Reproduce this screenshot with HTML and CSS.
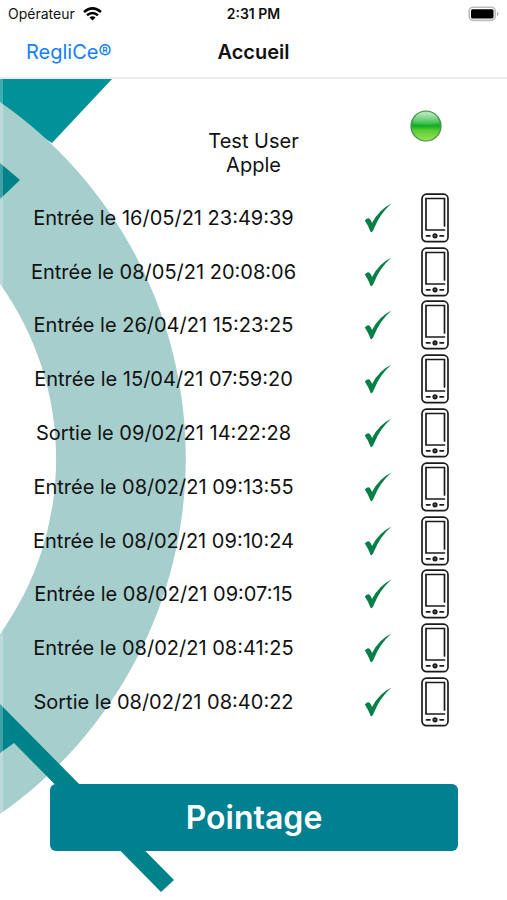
FILE: index.html
```html
<!DOCTYPE html>
<html lang="fr">
<head>
<meta charset="utf-8">
<meta name="viewport" content="width=device-width, initial-scale=1">
<title>Accueil</title>
<link rel="stylesheet" href="styles.css">
</head>
<body>
<svg class="symbols" aria-hidden="true">
  <symbol id="check" viewBox="0 0 28 32">
    <path fill="#087f46" d="M.8 18.500Q2.500 16.500 4 16.300Q6.500 16.500 8 21Q15 7.500 27.500 1.500Q16 11.500 10 26.500Q8.500 30.500 6.800 30.200Q4.500 24 .8 18.500Z"/>
  </symbol>
  <symbol id="phone" viewBox="0 0 28 50">
    <g fill="none" stroke="#1b1b1b" stroke-width="1.700" stroke-linecap="round">
      <rect x="1" y="1.200" width="26" height="47.500" rx="4.500"/>
      <path d="M23.500 33V5.500H5V37H23.500"/>
      <path d="M5.500 42.800H9M19 42.800H22.500"/>
    </g>
    <circle cx="14" cy="42.800" r="2.600" fill="#1b1b1b"/>
    <path d="M13.300 42.800H14.700" stroke="#999" stroke-width="1"/>
  </symbol>
</svg>
<div class="app">
  <header class="top">
    <div class="status">
      <span class="carrier">Opérateur
        <svg class="wifi" viewBox="0 0 19 14" aria-hidden="true">
          <g fill="none" stroke="#000" stroke-width="2.500">
            <path d="M1 5Q9.500 -2.300 18 5"/>
            <path d="M4 8.300Q9.500 3.800 15 8.300"/>
          </g>
          <path d="M6.500 10.500Q9.500 8.200 12.500 10.500L9.500 13.500Z"/>
        </svg>
      </span>
      <time class="clock">2:31 PM</time>
      <svg class="battery" viewBox="0 0 31 16" aria-hidden="true">
        <rect x="1.200" y="1.200" width="26" height="13.200" rx="3.800" fill="#fff" stroke="#bdbdbd" stroke-width="1.600"/>
        <rect x="3" y="3.200" width="22.500" height="9.300" rx="1.500"/>
        <path d="M29 5.500Q32 7.800 29 10.200Z" fill="#aaa"/>
      </svg>
    </div>
    <nav class="nav">
      <a class="back" href="#">RegliCe®</a>
      <h1 class="title">Accueil</h1>
    </nav>
  </header>
  <main class="main">
    <svg class="backdrop" viewBox="0 79 190 821" aria-hidden="true">
      <path fill="#009298" d="M0 79H112L52 143L0 110Z"/>
      <path fill="#a6cecd" d="M0 102A434 434 0 0 1 0 814V634A301 301 0 0 0 0 284Z"/>
      <path fill="#00828a" d="M0 163L20 180L0 199Z"/>
      <path fill="#00828a" d="M0 704L174 880L161 892L14 743L0 753Z"/>
      <path fill="#fff" fill-opacity=".25" d="M0 79H3V900H0Z"/>
    </svg>
    <section class="user">
      <p class="name">Test User<br>Apple</p>
      <svg class="light" viewBox="0 0 32 32" role="img" aria-label="En ligne">
        <defs>
          <linearGradient id="orb" x1="0" y1="0" x2="0" y2="1">
            <stop offset="0" stop-color="#8edb9b"/>
            <stop offset=".35" stop-color="#42bd4e"/>
            <stop offset=".5" stop-color="#0fae21"/>
            <stop offset=".65" stop-color="#5ccb38"/>
            <stop offset="1" stop-color="#98e255"/>
          </linearGradient>
          <linearGradient id="gloss" x1="0" y1="0" x2="0" y2="1">
            <stop offset="0" stop-color="#d6f5dc" stop-opacity=".7"/>
            <stop offset="1" stop-color="#8be092" stop-opacity=".1"/>
          </linearGradient>
        </defs>
        <circle cx="16" cy="16" r="15" fill="url(#orb)" stroke="#478b4d" stroke-width="1.200"/>
        <path d="M3 13Q5 2 16 2T29 13Q16 17 3 13Z" fill="url(#gloss)"/>
      </svg>
    </section>
    <ul class="entries">
      <li class="entry"><span class="label">Entrée le 16/05/21 23:49:39</span><svg class="check"><use href="#check"/></svg><svg class="phone"><use href="#phone"/></svg></li>
      <li class="entry"><span class="label">Entrée le 08/05/21 20:08:06</span><svg class="check"><use href="#check"/></svg><svg class="phone"><use href="#phone"/></svg></li>
      <li class="entry"><span class="label">Entrée le 26/04/21 15:23:25</span><svg class="check"><use href="#check"/></svg><svg class="phone"><use href="#phone"/></svg></li>
      <li class="entry"><span class="label">Entrée le 15/04/21 07:59:20</span><svg class="check"><use href="#check"/></svg><svg class="phone"><use href="#phone"/></svg></li>
      <li class="entry"><span class="label">Sortie le 09/02/21 14:22:28</span><svg class="check"><use href="#check"/></svg><svg class="phone"><use href="#phone"/></svg></li>
      <li class="entry"><span class="label">Entrée le 08/02/21 09:13:55</span><svg class="check"><use href="#check"/></svg><svg class="phone"><use href="#phone"/></svg></li>
      <li class="entry"><span class="label">Entrée le 08/02/21 09:10:24</span><svg class="check"><use href="#check"/></svg><svg class="phone"><use href="#phone"/></svg></li>
      <li class="entry"><span class="label">Entrée le 08/02/21 09:07:15</span><svg class="check"><use href="#check"/></svg><svg class="phone"><use href="#phone"/></svg></li>
      <li class="entry"><span class="label">Entrée le 08/02/21 08:41:25</span><svg class="check"><use href="#check"/></svg><svg class="phone"><use href="#phone"/></svg></li>
      <li class="entry"><span class="label">Sortie le 08/02/21 08:40:22</span><svg class="check"><use href="#check"/></svg><svg class="phone"><use href="#phone"/></svg></li>
    </ul>
    <button class="punch" type="button">Pointage</button>
  </main>
</div>
</body>
</html>
```
FILE: styles.css
```css
* {
  box-sizing: border-box;
}

body {
  margin: 0;
  background: #fff;
  color: #111;
  font-family: Inter, "Liberation Sans", sans-serif;
  font-size: 20px;
  line-height: 24px;
}

.symbols {
  position: absolute;
  width: 0;
  height: 0;
}

.app {
  display: flex;
  flex-direction: column;
  min-height: 100vh;
}

.top {
  border-bottom: 2px solid #ececec;
}

.status,
.nav {
  display: grid;
  grid-template-columns: 1fr auto 1fr;
  align-items: center;
}

.status {
  height: 27px;
  padding: 0 8px;
  font-size: 14px;
}

.carrier {
  display: flex;
  align-items: center;
  gap: 8px;
}

.wifi {
  width: 19px;
  height: 14px;
}

.clock {
  font-weight: 600;
}

.battery {
  width: 31px;
  height: 16px;
  justify-self: end;
}

.nav {
  height: 50px;
  padding: 0 26px;
}

.back {
  color: #1380ff;
  text-decoration: none;
}

.title {
  margin: 0;
  font-size: 20px;
  font-weight: 600;
}

.main {
  position: relative;
  display: flex;
  flex: 1;
  flex-direction: column;
}

.backdrop {
  position: absolute;
  top: 0;
  left: 0;
  z-index: -1;
  height: 100%;
}

.user {
  display: grid;
  grid-template-columns: 1fr auto 1fr;
  height: 112px;
  padding-top: 31px;
}

.name {
  grid-column: 2;
  margin: 19px 0 0;
  text-align: center;
}

.light {
  width: 32px;
  height: 32px;
  margin-right: 65px;
  justify-self: end;
}

.entries {
  display: flex;
  flex: 1;
  flex-direction: column;
  margin: 0;
  padding: 0;
  list-style: none;
}

.entry {
  display: grid;
  flex: 1;
  grid-template-columns: 1fr 28px 28px;
  column-gap: 29px;
  align-items: center;
  padding-right: 58px;
}

.label {
  padding-right: 8px;
  text-align: center;
}

.check {
  width: 28px;
  height: 32px;
}

.phone {
  width: 28px;
  height: 50px;
}

.punch {
  height: 67px;
  margin: 55px 49px 49px 50px;
  border: 0;
  border-radius: 6px;
  background: #008090;
  color: #fff;
  font-family: inherit;
  font-size: 32px;
  font-weight: 600;
}
```
